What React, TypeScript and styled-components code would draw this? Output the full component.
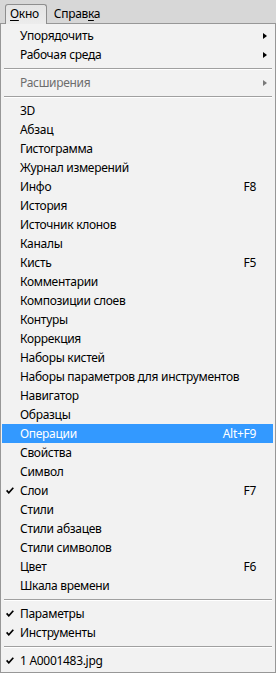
import React from "react";
import styled, { createGlobalStyle } from "styled-components";

type Entry =
  | { sep: true }
  | {
      sep?: false;
      label: string;
      shortcut?: string;
      checked?: boolean;
      submenu?: boolean;
      disabled?: boolean;
      active?: boolean;
    };

const entries: Entry[] = [
  { label: "Упорядочить", submenu: true },
  { label: "Рабочая среда", submenu: true },
  { sep: true },
  { label: "Расширения", submenu: true, disabled: true },
  { sep: true },
  { label: "3D" },
  { label: "Абзац" },
  { label: "Гистограмма" },
  { label: "Журнал измерений" },
  { label: "Инфо", shortcut: "F8" },
  { label: "История" },
  { label: "Источник клонов" },
  { label: "Каналы" },
  { label: "Кисть", shortcut: "F5" },
  { label: "Комментарии" },
  { label: "Композиции слоев" },
  { label: "Контуры" },
  { label: "Коррекция" },
  { label: "Наборы кистей" },
  { label: "Наборы параметров для инструментов" },
  { label: "Навигатор" },
  { label: "Образцы" },
  { label: "Операции", shortcut: "Alt+F9", active: true },
  { label: "Свойства" },
  { label: "Символ" },
  { label: "Слои", shortcut: "F7", checked: true },
  { label: "Стили" },
  { label: "Стили абзацев" },
  { label: "Стили символов" },
  { label: "Цвет", shortcut: "F6" },
  { label: "Шкала времени" },
  { sep: true },
  { label: "Параметры", checked: true },
  { label: "Инструменты", checked: true },
  { sep: true },
  { label: "1 A0001483.jpg", checked: true },
];

const GlobalStyle = createGlobalStyle`
  html, body {
    margin: 0;
    padding: 0;
    background: #f2f2f2;
  }
  body {
    font-family: "Noto Sans", "Open Sans", "Liberation Sans", sans-serif;
    font-size: 12px;
    letter-spacing: -0.3px;
    color: #000;
  }
`;

const CheckIcon = () => (
  <svg width="8" height="7" viewBox="0 0 8 7">
    <path d="M0.6 3.4 L2.8 5.8 L7.3 0.8" fill="none" stroke="#000" strokeWidth="1.7" />
  </svg>
);

const App = () => {
  return (
    <SWindow>
      <GlobalStyle />
      <SMenuBar>
        <STab $open>
          <u>О</u>кно
        </STab>
        <STab>
          Справ<u>к</u>а
        </STab>
      </SMenuBar>
      <SDropdown>
        {entries.map((e, i) =>
          e.sep ? (
            <SSeparator key={i} />
          ) : (
            <SRow key={i} $active={e.active} $disabled={e.disabled}>
              <SCheck>{e.checked && <CheckIcon />}</SCheck>
              <SLabel>{e.label}</SLabel>
              <SShortcut>{e.shortcut}</SShortcut>
              <SArrowCell>{e.submenu && <SArrow $disabled={e.disabled} />}</SArrowCell>
            </SRow>
          )
        )}
      </SDropdown>
    </SWindow>
  );
};

export default App;

const SWindow = styled.div`
  width: 276px;
  height: 673px;
  display: flex;
  flex-direction: column;
  overflow: hidden;
`;

const SMenuBar = styled.div`
  height: 23px;
  flex: none;
  display: flex;
  align-items: flex-end;
  padding-left: 5px;
  gap: 2px;
  background: #d7d7d7;
  position: relative;
  z-index: 1;
`;

const STab = styled.div<{ $open?: boolean }>`
  line-height: 17px;
  padding: 0 7px 0 4px;
  box-sizing: border-box;
  border: 1px solid ${(p) => (p.$open ? "#8e8e8e" : "transparent")};
  border-bottom: none;
  border-radius: 3px 3px 0 0;
  background: ${(p) => (p.$open ? "linear-gradient(#e4e4e4, #ececec)" : "transparent")};
  margin-bottom: ${(p) => (p.$open ? "-1px" : "0")};
  height: ${(p) => (p.$open ? "20px" : "19px")};

  u {
    text-decoration-thickness: 1px;
    text-underline-offset: 2px;
  }
`;

const SDropdown = styled.div`
  flex: 1;
  border: 1px solid #979797;
  background: #f2f2f2;
  padding: 2px 1px 1px 1px;
  display: flex;
  flex-direction: column;
`;

const SRow = styled.div<{ $active?: boolean; $disabled?: boolean }>`
  height: 19px;
  flex: none;
  display: grid;
  grid-template-columns: 18px 1fr auto 17px;
  align-items: center;
  line-height: 19px;
  background: ${(p) => (p.$active ? "#3399ff" : "transparent")};
  color: ${(p) => (p.$active ? "#fff" : p.$disabled ? "#6d6d6d" : "#000")};
  margin-right: 1px;
`;

const SCheck = styled.div`
  display: flex;
  align-items: center;
  justify-content: flex-end;
  padding-right: 6px;
  height: 100%;
`;

const SLabel = styled.span`
  white-space: nowrap;
`;

const SShortcut = styled.span`
  white-space: nowrap;
`;

const SArrowCell = styled.div`
  display: flex;
  align-items: center;
  justify-content: center;
  height: 100%;
`;

const SArrow = styled.span<{ $disabled?: boolean }>`
  width: 0;
  height: 0;
  border-top: 3.5px solid transparent;
  border-bottom: 3.5px solid transparent;
  border-left: 4px solid ${(p) => (p.$disabled ? "#7a7a7a" : "#000")};
`;

const SSeparator = styled.div`
  height: 9px;
  flex: none;
  display: flex;
  align-items: center;
  margin: 0 2px 0 2px;

  &::before {
    content: "";
    flex: 1;
    border-top: 1px solid #a0a0a0;
    border-bottom: 1px solid #ffffff;
  }
`;
